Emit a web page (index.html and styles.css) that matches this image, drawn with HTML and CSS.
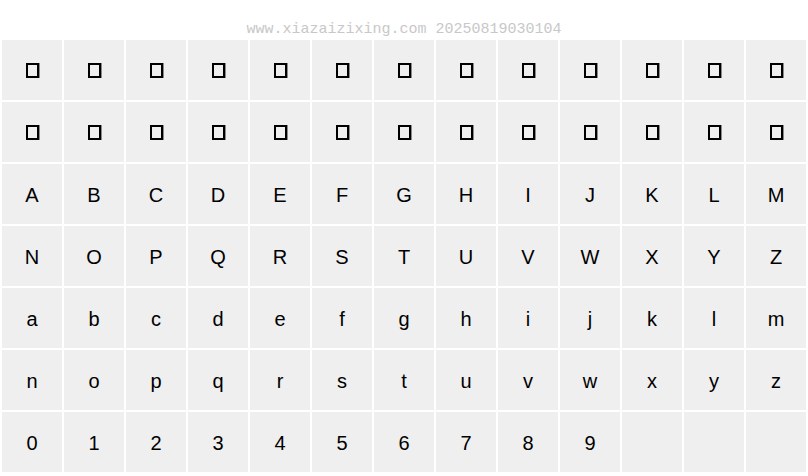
FILE: index.html
```html
<!DOCTYPE html>
<html lang="en">

<head>
  <meta charset="UTF-8">
  <meta name="viewport" content="width=device-width, initial-scale=1.0">
  <title>Glyph preview</title>
  <link rel="stylesheet" href="styles.css">
</head>

<body>
  <header class="stamp">www.xiazaizixing.com 20250819030104</header>

  <main class="glyphs">
    <!-- 缺字的格子，用方框代替 -->
    <div class="cell"><span class="tofu"></span></div>
    <div class="cell"><span class="tofu"></span></div>
    <div class="cell"><span class="tofu"></span></div>
    <div class="cell"><span class="tofu"></span></div>
    <div class="cell"><span class="tofu"></span></div>
    <div class="cell"><span class="tofu"></span></div>
    <div class="cell"><span class="tofu"></span></div>
    <div class="cell"><span class="tofu"></span></div>
    <div class="cell"><span class="tofu"></span></div>
    <div class="cell"><span class="tofu"></span></div>
    <div class="cell"><span class="tofu"></span></div>
    <div class="cell"><span class="tofu"></span></div>
    <div class="cell"><span class="tofu"></span></div>
    <div class="cell"><span class="tofu"></span></div>
    <div class="cell"><span class="tofu"></span></div>
    <div class="cell"><span class="tofu"></span></div>
    <div class="cell"><span class="tofu"></span></div>
    <div class="cell"><span class="tofu"></span></div>
    <div class="cell"><span class="tofu"></span></div>
    <div class="cell"><span class="tofu"></span></div>
    <div class="cell"><span class="tofu"></span></div>
    <div class="cell"><span class="tofu"></span></div>
    <div class="cell"><span class="tofu"></span></div>
    <div class="cell"><span class="tofu"></span></div>
    <div class="cell"><span class="tofu"></span></div>
    <div class="cell"><span class="tofu"></span></div>

    <!-- 大写 -->
    <div class="cell">A</div>
    <div class="cell">B</div>
    <div class="cell">C</div>
    <div class="cell">D</div>
    <div class="cell">E</div>
    <div class="cell">F</div>
    <div class="cell">G</div>
    <div class="cell">H</div>
    <div class="cell">I</div>
    <div class="cell">J</div>
    <div class="cell">K</div>
    <div class="cell">L</div>
    <div class="cell">M</div>
    <div class="cell">N</div>
    <div class="cell">O</div>
    <div class="cell">P</div>
    <div class="cell">Q</div>
    <div class="cell">R</div>
    <div class="cell">S</div>
    <div class="cell">T</div>
    <div class="cell">U</div>
    <div class="cell">V</div>
    <div class="cell">W</div>
    <div class="cell">X</div>
    <div class="cell">Y</div>
    <div class="cell">Z</div>

    <!-- 小写 -->
    <div class="cell">a</div>
    <div class="cell">b</div>
    <div class="cell">c</div>
    <div class="cell">d</div>
    <div class="cell">e</div>
    <div class="cell">f</div>
    <div class="cell">g</div>
    <div class="cell">h</div>
    <div class="cell">i</div>
    <div class="cell">j</div>
    <div class="cell">k</div>
    <div class="cell">l</div>
    <div class="cell">m</div>
    <div class="cell">n</div>
    <div class="cell">o</div>
    <div class="cell">p</div>
    <div class="cell">q</div>
    <div class="cell">r</div>
    <div class="cell">s</div>
    <div class="cell">t</div>
    <div class="cell">u</div>
    <div class="cell">v</div>
    <div class="cell">w</div>
    <div class="cell">x</div>
    <div class="cell">y</div>
    <div class="cell">z</div>

    <!-- 数字 -->
    <div class="cell">0</div>
    <div class="cell">1</div>
    <div class="cell">2</div>
    <div class="cell">3</div>
    <div class="cell">4</div>
    <div class="cell">5</div>
    <div class="cell">6</div>
    <div class="cell">7</div>
    <div class="cell">8</div>
    <div class="cell">9</div>
    <div class="cell"></div>
    <div class="cell"></div>
    <div class="cell"></div>
  </main>
</body>

</html>
```

FILE: styles.css
```css
body {
  margin: 0;
  background-color: #fff;
}

/* 顶部的水印文字 */
.stamp {
  box-sizing: border-box;
  height: 40px;
  padding-top: 21px;
  text-align: center;
  font-family: "Liberation Mono", monospace;
  font-size: 15px;
  line-height: 17px;
  color: #c8c8c8;
}

/* 13 列的字符表，白色缝隙当作分割线 */
.glyphs {
  display: grid;
  grid-template-columns: repeat(13, 60px);
  grid-auto-rows: 60px;
  gap: 2px;
  padding: 0 2px;
}

.cell {
  display: flex;
  justify-content: center;
  align-items: center;
  box-sizing: border-box;
  padding-top: 3px;
  background-color: #efefef;

  font-family: "Liberation Sans", Arial, sans-serif;
  font-size: 20px;
  color: #000;
}

.tofu {
  display: block;
  box-sizing: border-box;
  width: 13px;
  height: 15px;
  margin-top: -3px;
  border: 2px solid #000;
  box-shadow: 1px 0 0 #8a8a8a;
}
```
